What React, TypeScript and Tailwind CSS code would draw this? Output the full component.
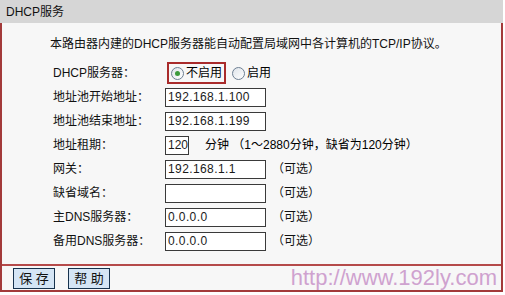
import React from 'react';

const cjk = { fontFamily: '"Liberation Sans", "Noto Sans CJK SC", sans-serif' };

const Radio = ({ checked }: { checked?: boolean }) => (
    <span className="inline-flex items-center justify-center w-[13px] h-[13px] rounded-full border border-[#6d7f93] bg-gradient-to-br from-[#dfe4ea] to-white">
        {checked && <span className="w-[5px] h-[5px] rounded-full bg-[#3c9a3c]" />}
    </span>
);

const Input = ({ value, w = 'w-[101px]', track = 'tracking-[0.4px]' }: { value: string; w?: string; track?: string }) => (
    <div className={`${w} ${track} h-[19px] border border-[#3a3a3a] bg-white flex items-center pl-[2px] text-[12px] text-[#1a1a1a] whitespace-nowrap overflow-hidden`}>
        {value}
    </div>
);

const Row = ({ label, children }: { label: string; children: React.ReactNode }) => (
    <div className="flex items-center h-[24px]">
        <div className="w-[112px] text-[12px] text-[#111]">{label}</div>
        <div className="flex items-center">{children}</div>
    </div>
);

const Optional = () => <span className="ml-[6px] text-[12px] text-[#111]">（可选）</span>;

export default function App() {
    return (
        <div className="w-[503px] bg-white" style={cjk}>
            <div className="h-[23px] bg-[#d6d6d6] flex items-center pl-[6px] text-[12px] text-[#111]">DHCP服务</div>
            <div className="border-x-2 border-b-2 border-[#a33a3a] bg-[#f7f7f7]">
                <div className="pt-[12px] pl-[48px] text-[12px] text-[#111] h-[38px]">
                    本路由器内建的DHCP服务器能自动配置局域网中各计算机的TCP/IP协议。
                </div>
                <div className="pl-[51px] pb-[11px]">
                    <Row label="DHCP服务器：">
                        <div className="ml-[2px] h-[22px] border-2 border-[#a92b2b] flex items-center pl-[2px] pr-[2px] gap-[2px] text-[12px]">
                            <Radio checked />
                            <span>不启用</span>
                        </div>
                        <div className="ml-[6px] flex items-center gap-[2px] text-[12px]">
                            <Radio />
                            <span>启用</span>
                        </div>
                    </Row>
                    <Row label="地址池开始地址：">
                        <Input value="192.168.1.100" />
                    </Row>
                    <Row label="地址池结束地址：">
                        <Input value="192.168.1.199" />
                    </Row>
                    <Row label="地址租期：">
                        <Input value="120" w="w-[24px]" track="tracking-normal" />
                        <span className="ml-[16px] text-[12px]">分钟 （1～2880分钟，缺省为120分钟）</span>
                    </Row>
                    <Row label="网关：">
                        <Input value="192.168.1.1" />
                        <Optional />
                    </Row>
                    <Row label="缺省域名：">
                        <Input value="" />
                        <Optional />
                    </Row>
                    <Row label="主DNS服务器：">
                        <Input value="0.0.0.0" />
                        <Optional />
                    </Row>
                    <Row label="备用DNS服务器：">
                        <Input value="0.0.0.0" />
                        <Optional />
                    </Row>
                </div>
                <div className="border-t-2 border-[#b54a4a] h-[26px] flex items-center pl-[11px] pr-[4px]">
                    <button className="w-[42px] h-[21px] border border-[#17324d] bg-[#d5e5f5] text-[13px] leading-none whitespace-nowrap text-[#111]">保&nbsp;存</button>
                    <button className="ml-[13px] w-[42px] h-[21px] border border-[#17324d] bg-[#d5e5f5] text-[13px] leading-none whitespace-nowrap text-[#111]">帮&nbsp;助</button>
                    <span className="ml-auto text-[22px] leading-none text-[#cfa2cf]" style={{ fontFamily: '"Liberation Sans", sans-serif' }}>http://www.192ly.com</span>
                </div>
            </div>
        </div>
    );
}
